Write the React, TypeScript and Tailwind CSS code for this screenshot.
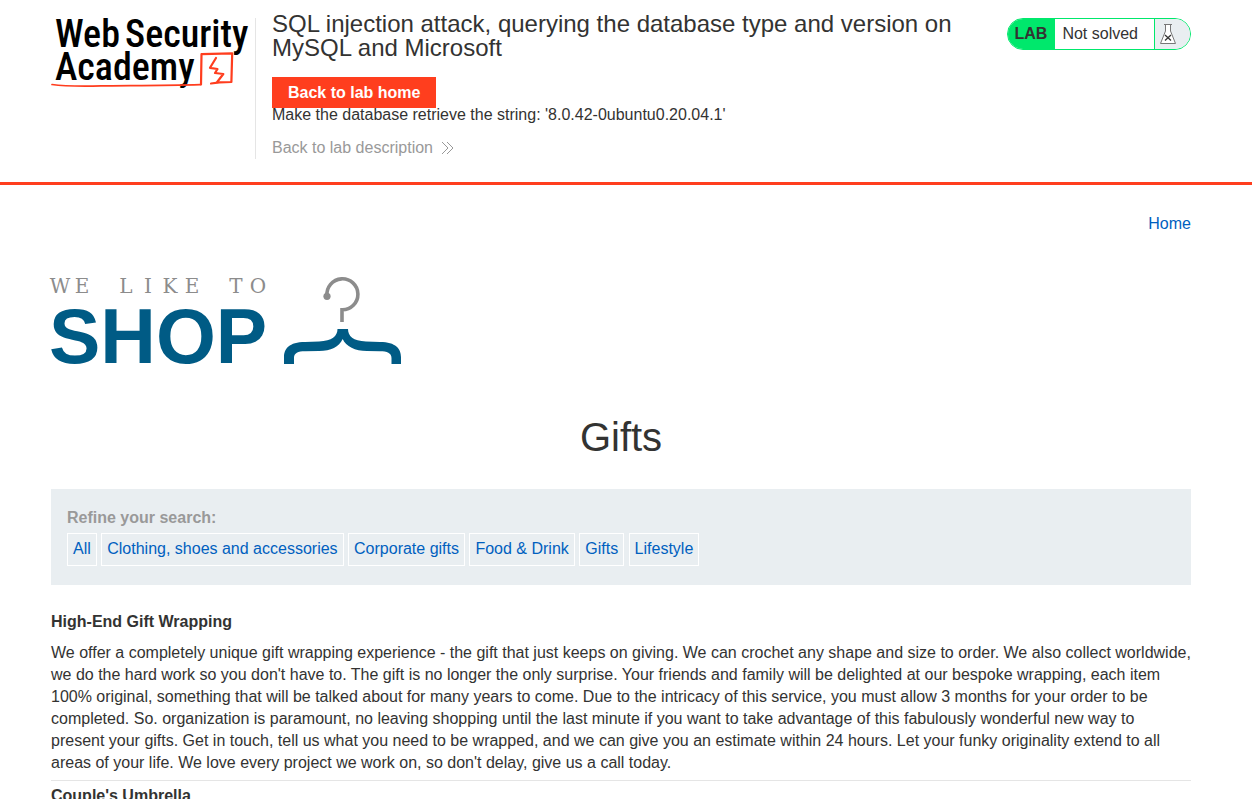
const categories = [
  'All',
  'Clothing, shoes and accessories',
  'Corporate gifts',
  'Food & Drink',
  'Gifts',
  'Lifestyle',
];

const products = [
  {
    name: 'High-End Gift Wrapping',
    text: "We offer a completely unique gift wrapping experience - the gift that just keeps on giving. We can crochet any shape and size to order. We also collect worldwide, we do the hard work so you don't have to. The gift is no longer the only surprise. Your friends and family will be delighted at our bespoke wrapping, each item 100% original, something that will be talked about for many years to come. Due to the intricacy of this service, you must allow 3 months for your order to be completed. So. organization is paramount, no leaving shopping until the last minute if you want to take advantage of this fabulously wonderful new way to present your gifts. Get in touch, tell us what you need to be wrapped, and we can give you an estimate within 24 hours. Let your funky originality extend to all areas of your life. We love every project we work on, so don't delay, give us a call today.",
  },
  { name: "Couple's Umbrella", text: '' },
];

function AcademyLogo() {
  return (
    <svg viewBox="0 0 204 74" className="h-[74px] w-[204px] shrink-0 overflow-visible" role="img" aria-label="Web Security Academy">
      <g className="font-['Roboto_Condensed','Liberation_Sans_Narrow',Roboto,sans-serif] text-[38px] font-medium" fill="#000">
        <text x="4" y="29">Web</text>
        <text x="74" y="29">Security</text>
        <text x="4" y="62">Academy</text>
      </g>
      <g fill="none" stroke="#ff3d1e" strokeLinejoin="round" strokeLinecap="round">
        <path d="M1 66.500C15 68.500 30 68.300 50 67.900S110 67.600 149.500 66.600" strokeWidth="1.700" />
        <path d="M150 66.400L150.500 36.200L181.200 35.300L180.400 64L168.500 64.400L160 65.500" strokeWidth="2.200" />
        <path d="M165 40L159 49.800L166.500 51L164 55L172.300 56L166.200 64" strokeWidth="2.200" />
      </g>
    </svg>
  );
}

function ShopLogo() {
  return (
    <svg viewBox="0 0 351 96" className="block h-24 w-[351px] overflow-visible" role="img" aria-label="We like to shop">
      <text
        className="font-['DejaVu_Serif',serif] text-[20px]"
        textAnchor="middle"
        x="9 31 53 75 97 119 141 163 185 207"
        y="23"
        fill="#8c8c8c"
      >
        WE LIKE TO
      </text>
      <text className="font-['Liberation_Sans',Arial,sans-serif] text-[77px] font-bold" x="-2" y="93" fill="#005b85">
        SHOP
      </text>
      <path d="M276 26A15.500 15.500 0 1 1 291 39.800V52" fill="none" stroke="#8c8c8c" strokeWidth="3.600" />
      <circle cx="276" cy="26.300" r="3.600" fill="#8c8c8c" />
      <path
        d="M286.500 59H297C297 66 302 71 315 71.500L329 72C345 72 350 79 350 87V94H340.500V88C340.500 83 336 81.300 329 81.300L316 81C304 81 295 76.500 291.700 69C288 77 280 81 268 81L254 81.300C247 81.300 243 83 243 88V94H233V87C233 79 238 72 254 72L268 71.500C281 71 286.500 66 286.500 59Z"
        fill="#005b85"
      />
    </svg>
  );
}

function FlaskIcon() {
  return (
    <svg viewBox="0 0 18 22" className="h-[22px] w-[18px]" fill="#fff" stroke="#777" strokeWidth="1" aria-hidden="true">
      <path d="M6.500 1.500V8L1.500 20.500H16.500L11.500 8V1.500Z" />
      <path d="M5 1.500H13" />
      <path d="M6 12L12 17.500M12 12L6 17.500" stroke="#333" strokeWidth="1.300" />
    </svg>
  );
}

export default function App() {
  return (
    <div className="bg-white font-['Liberation_Sans',Arial,sans-serif] text-base leading-[22px] text-[#333332]">
      <header className="border-b-[3px] border-[#ff3e1e] pt-[18px] pr-[61px] pb-[23px] pl-[51px]">
        <div className="flex items-start">
          <AcademyLogo />
          <div className="min-h-[140px] max-w-[720px] flex-1 border-l border-[#e5e5e5] pl-4">
            <h2 className="-mt-1.5 text-2xl leading-6">
              SQL injection attack, querying the database type and version on MySQL and Microsoft
            </h2>
            <a href="#home" className="mt-[17px] block w-fit bg-[#ff3e1e] px-4 py-1 font-bold leading-[23px] text-white">
              Back to lab home
            </a>
            <p className="-mt-1">Make the database retrieve the string: '8.0.42-0ubuntu0.20.04.1'</p>
            <a href="#description" className="mt-[11px] flex w-fit items-center gap-2 text-[#999]">
              Back to lab description
              <svg viewBox="0 0 13 14" className="h-3.5 w-[13px]" fill="none" stroke="#999" aria-hidden="true">
                <path d="M1 1L7 7L1 13M6 1L12 7L6 13" />
              </svg>
            </a>
          </div>
          <div className="ml-auto flex h-8 shrink-0 items-stretch overflow-hidden rounded-full border border-[#00e86c] leading-[30px]">
            <span className="bg-[#00e86c] px-2 pl-[7px] font-bold">LAB</span>
            <span className="pr-4 pl-[7px]">Not solved</span>
            <span className="flex w-9 items-center border-l border-[#00e86c] bg-[#e9eef1] pl-1">
              <FlaskIcon />
            </span>
          </div>
        </div>
      </header>

      <main className="pr-[61px] pl-[51px]">
        <nav className="flex justify-end pt-7">
          <a href="#home" className="text-[#0060bf]">Home</a>
        </nav>
        <div className="mt-[35px]">
          <ShopLogo />
        </div>
        <h1 className="mt-[43px] text-center text-[40px] leading-[56px]">Gifts</h1>
        <section className="mt-6 bg-[#e9eef1] px-4 pt-[18px] pb-[19px]">
          <h2 className="font-bold text-[#999]">Refine your search:</h2>
          <div className="mt-1">
            {categories.map((category) => (
              <span key={category}>
                <a
                  href="#category"
                  className="inline-block border border-white px-[5px] pt-1 pb-[5px] align-top text-[#0060bf]"
                >
                  {category}
                </a>{' '}
              </span>
            ))}
          </div>
        </section>
        <div className="mt-[22px]">
          {products.map((product) => (
            <article key={product.name} className="border-b border-[#e5e5e5] pt-1 pb-1.5">
              <h3 className="pb-[9px] font-bold">{product.name}</h3>
              {product.text && <p>{product.text}</p>}
            </article>
          ))}
        </div>
      </main>
    </div>
  );
}
